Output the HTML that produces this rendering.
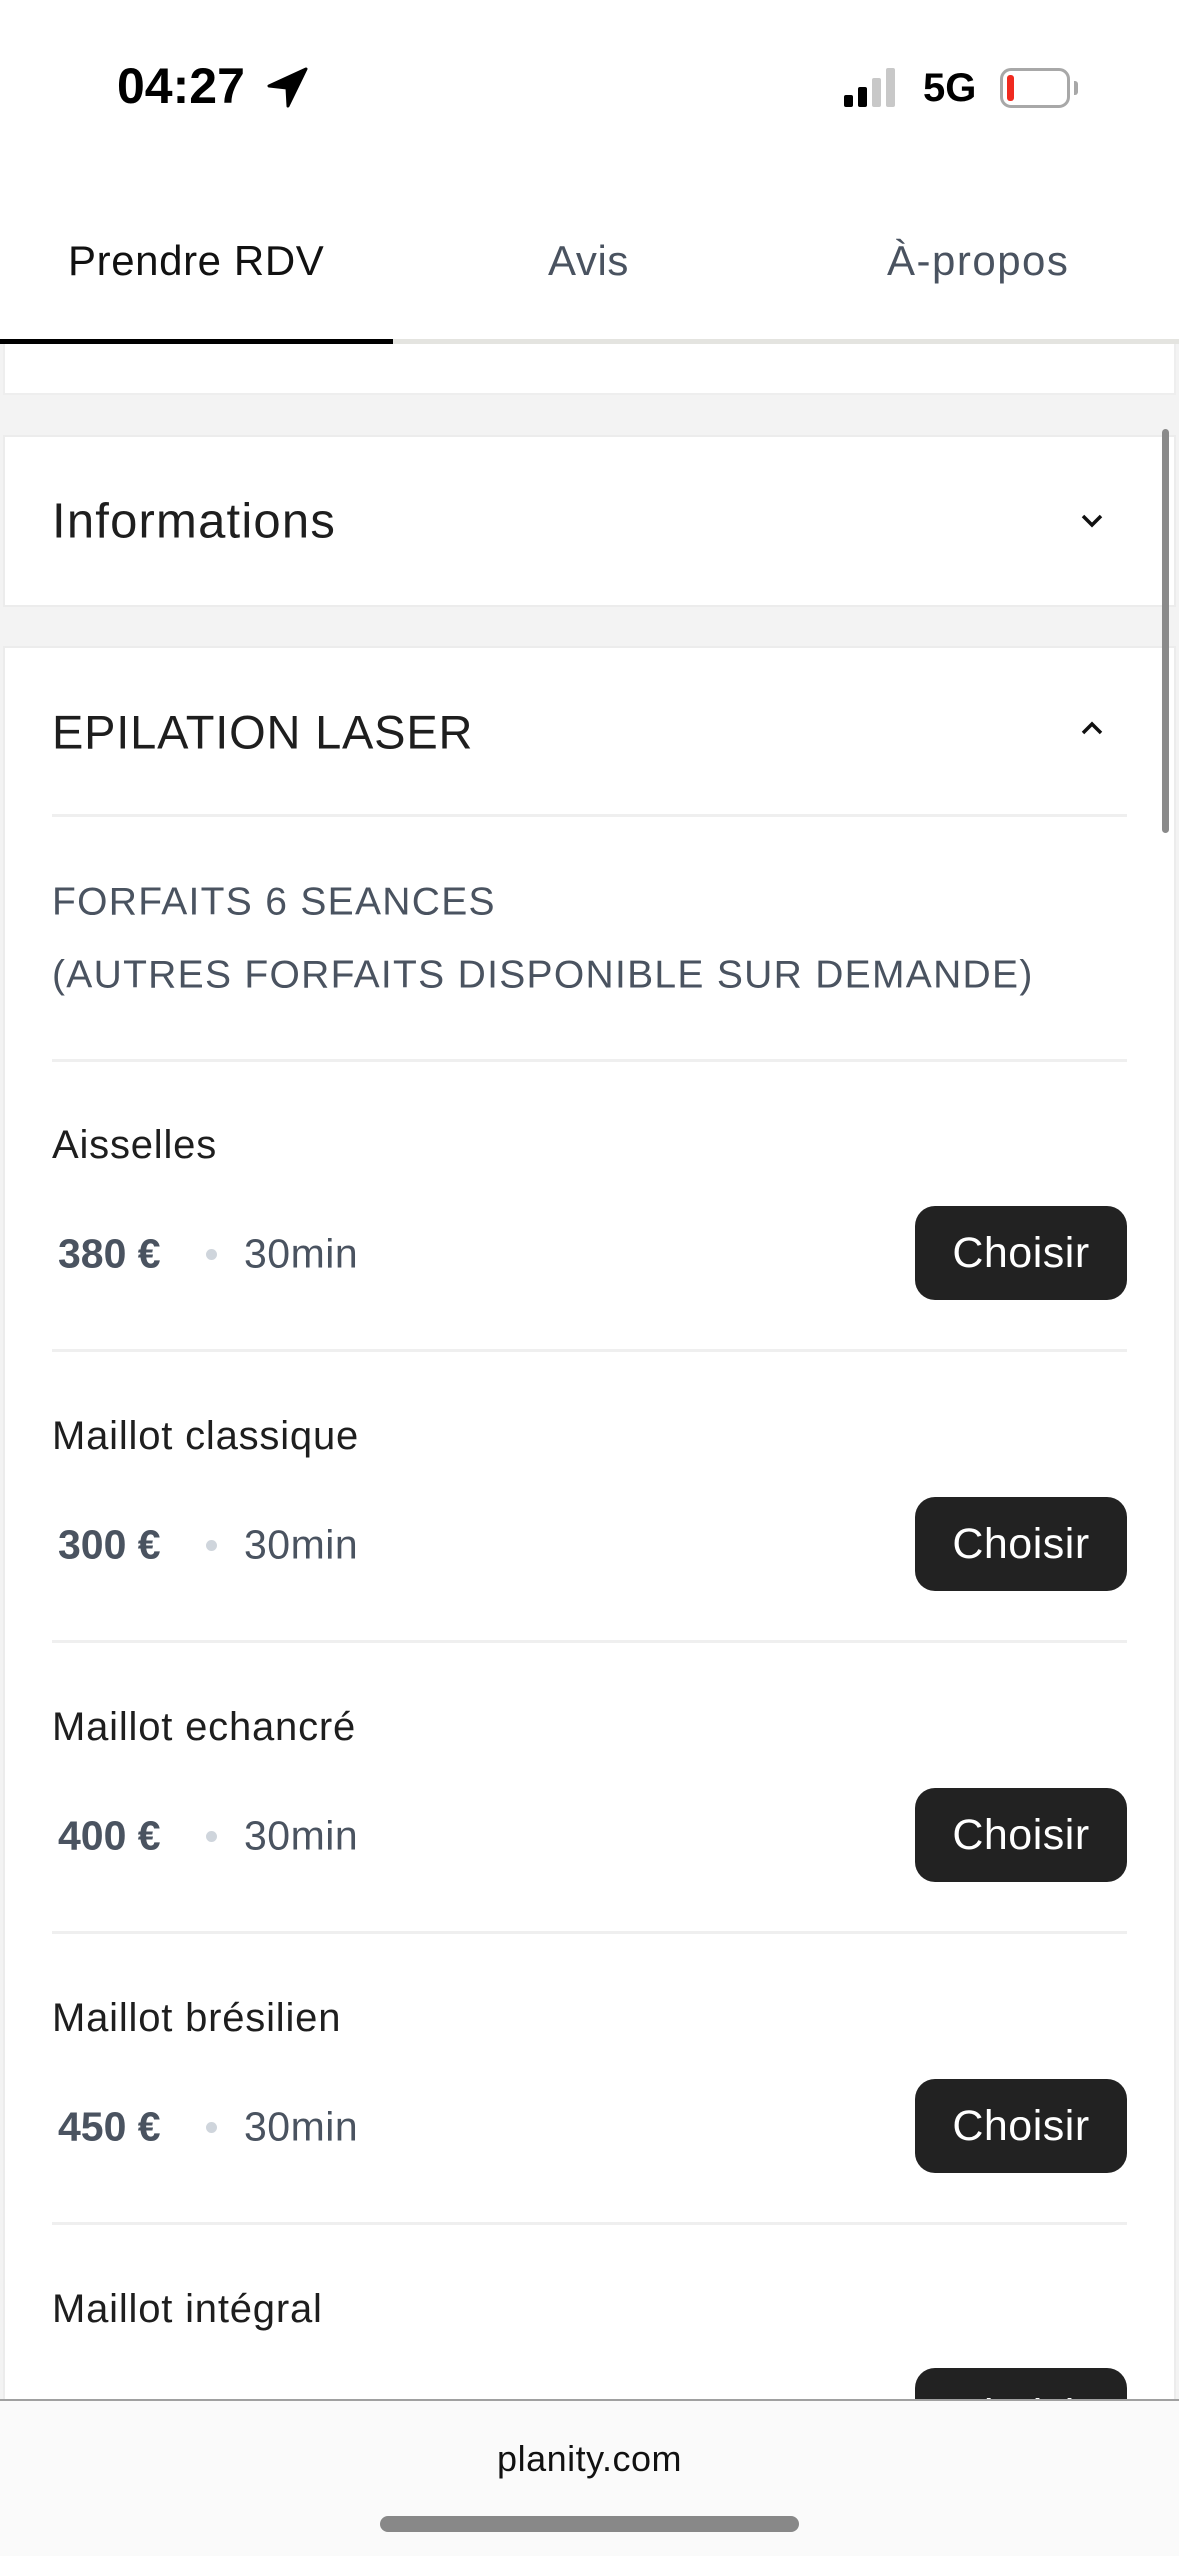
<!DOCTYPE html>
<html><head><meta charset="utf-8"><style>
*{margin:0;padding:0;box-sizing:border-box}
body{width:1179px;height:2556px;position:relative;background:#f3f3f3;font-family:"Liberation Sans",sans-serif;overflow:hidden}
.a{position:absolute;white-space:nowrap}
.c{line-height:1;transform:translateY(-50%)}
.btn{position:absolute;left:915px;width:212px;height:94px;background:#222;border-radius:20px;color:#fff;font-size:43px;letter-spacing:0.5px;display:flex;align-items:center;justify-content:center}
.div{position:absolute;left:52px;width:1075px;height:3px;background:#efefef}
.nm{font-size:40px;color:#1e1e1e;left:52px;letter-spacing:0.8px}
.pr{font-size:41px;color:#4a5360;left:58px;font-weight:bold}
.dot{position:absolute;left:206px;width:11px;height:11px;border-radius:50%;background:#cfd5dc}
.du{font-size:41px;color:#4a5360;left:244px;letter-spacing:0.5px}
</style></head><body>
<div class="a" style="left:0;top:0;width:1179px;height:344px;background:#fff"></div>
<div class="a c" style="left:117px;top:86px;font-size:50px;font-weight:bold;color:#000">04:27</div>
<svg class="a" style="left:266px;top:66px" width="44" height="44" viewBox="0 0 44 44"><path d="M40 3 L3 20 L21 22 L22 40 Z" fill="#000" stroke="#000" stroke-width="3" stroke-linejoin="round"/></svg>
<div class="a" style="left:844px;top:95px;width:9px;height:12px;background:#000;border-radius:2px"></div>
<div class="a" style="left:858px;top:87px;width:9px;height:20px;background:#000;border-radius:2px"></div>
<div class="a" style="left:872px;top:78px;width:9px;height:29px;background:#c8c8c8;border-radius:2px"></div>
<div class="a" style="left:886px;top:68px;width:9px;height:39px;background:#c8c8c8;border-radius:2px"></div>
<div class="a c" style="left:923px;top:88px;font-size:40px;font-weight:bold;color:#000">5G</div>
<div class="a" style="left:1000px;top:68px;width:70px;height:40px;border:3px solid #a8a8a8;border-radius:11px"></div>
<div class="a" style="left:1007px;top:75px;width:7px;height:26px;background:#f02a1f;border-radius:3px"></div>
<div class="a" style="left:1074px;top:81px;width:4px;height:14px;background:#a8a8a8;border-radius:0 3px 3px 0"></div>

<div class="a c" style="left:68px;top:261px;font-size:42px;color:#111;letter-spacing:0.6px">Prendre RDV</div>
<div class="a c" style="left:548px;top:261px;font-size:42px;color:#4a5360;letter-spacing:0.6px">Avis</div>
<div class="a c" style="left:887px;top:261px;font-size:42px;color:#4a5360;letter-spacing:1.5px">À-propos</div>
<div class="a" style="left:0;top:339px;width:1179px;height:5px;background:#e4e4e0"></div>
<div class="a" style="left:0;top:339px;width:393px;height:5px;background:#000"></div>
<div class="a" style="left:3px;top:344px;width:1173px;height:51px;background:#fff;border:2px solid #eee;border-top:0"></div>

<div class="a" style="left:3px;top:435px;width:1173px;height:172px;background:#fff;border:2px solid #ececec"></div>
<div class="a c" style="left:52px;top:522px;font-size:49px;color:#1e1e1e;letter-spacing:1.2px">Informations</div>
<svg class="a" style="left:1079px;top:511px" width="26" height="20"><path d="M4 5 L13 14 L22 5" fill="none" stroke="#111" stroke-width="3.5"/></svg>

<div class="a" style="left:3px;top:646px;width:1173px;height:1760px;background:#fff;border:2px solid #ececec"></div>
<div class="a" style="left:1162px;top:429px;width:7px;height:404px;background:#8a8a8a;border-radius:4px"></div>
<div class="a c" style="left:52px;top:732px;font-size:47px;color:#1e1e1e;letter-spacing:0.8px">EPILATION LASER</div>
<svg class="a" style="left:1079px;top:718px" width="26" height="20"><path d="M4 15 L13 6 L22 15" fill="none" stroke="#111" stroke-width="3.5"/></svg>
<div class="div" style="top:814px"></div>
<div class="a c" style="left:52px;top:902px;font-size:39px;color:#4a5360;letter-spacing:1.3px">FORFAITS 6 SEANCES</div>
<div class="a c" style="left:52px;top:975px;font-size:39px;color:#4a5360;letter-spacing:1.3px">(AUTRES FORFAITS DISPONIBLE SUR DEMANDE)</div>
<div class="div" style="top:1059px"></div>

<div class="a c nm" style="top:1145px">Aisselles</div>
<div class="a c pr" style="top:1254px">380 €</div><div class="dot" style="top:1249px"></div><div class="a c du" style="top:1254px">30min</div>
<div class="btn" style="top:1206px">Choisir</div>
<div class="div" style="top:1349px"></div>

<div class="a c nm" style="top:1436px">Maillot classique</div>
<div class="a c pr" style="top:1545px">300 €</div><div class="dot" style="top:1540px"></div><div class="a c du" style="top:1545px">30min</div>
<div class="btn" style="top:1497px">Choisir</div>
<div class="div" style="top:1640px"></div>

<div class="a c nm" style="top:1727px">Maillot echancré</div>
<div class="a c pr" style="top:1836px">400 €</div><div class="dot" style="top:1831px"></div><div class="a c du" style="top:1836px">30min</div>
<div class="btn" style="top:1788px">Choisir</div>
<div class="div" style="top:1931px"></div>

<div class="a c nm" style="top:2018px">Maillot brésilien</div>
<div class="a c pr" style="top:2127px">450 €</div><div class="dot" style="top:2122px"></div><div class="a c du" style="top:2127px">30min</div>
<div class="btn" style="top:2079px">Choisir</div>
<div class="div" style="top:2222px"></div>

<div class="a c nm" style="top:2309px">Maillot intégral</div>
<div class="btn" style="top:2368px">Choisir</div>

<div class="a" style="left:0;top:2399px;width:1179px;height:157px;background:#fafafa;border-top:2px solid #a0a0a0"></div>
<div class="a c" style="left:0;width:1179px;text-align:center;top:2459px;font-size:36px;color:#111;letter-spacing:0.5px">planity.com</div>
<div class="a" style="left:380px;top:2516px;width:419px;height:16px;background:#888;border-radius:8px"></div>
</body></html>
